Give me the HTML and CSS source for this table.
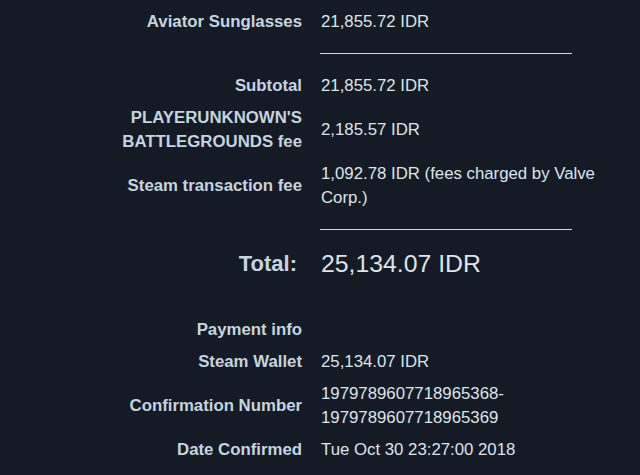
FILE: index.html
```html
<!DOCTYPE html>
<html>
<head>
<meta charset="utf-8">
<link rel="stylesheet" href="styles.css">
</head>
<body>
<div class="receipt">
  <div class="row">
    <div class="label">Aviator Sunglasses</div>
    <div class="value">21,855.72 IDR</div>
  </div>
  <div class="rule-row"><div class="rule"></div></div>
  <div class="row">
    <div class="label">Subtotal</div>
    <div class="value">21,855.72 IDR</div>
  </div>
  <div class="row">
    <div class="label">PLAYERUNKNOWN'S BATTLEGROUNDS fee</div>
    <div class="value">2,185.57 IDR</div>
  </div>
  <div class="row">
    <div class="label">Steam transaction fee</div>
    <div class="value">1,092.78 IDR (fees charged by Valve Corp.)</div>
  </div>
  <div class="rule-row"><div class="rule"></div></div>
  <div class="row total">
    <div class="label">Total:</div>
    <div class="value">25,134.07 IDR</div>
  </div>
  <div class="row payment">
    <div class="label">Payment info</div>
    <div class="value"></div>
  </div>
  <div class="row">
    <div class="label">Steam Wallet</div>
    <div class="value">25,134.07 IDR</div>
  </div>
  <div class="row">
    <div class="label">Confirmation Number</div>
    <div class="value">1979789607718965368-1979789607718965369</div>
  </div>
  <div class="row">
    <div class="label">Date Confirmed</div>
    <div class="value">Tue Oct 30 23:27:00 2018</div>
  </div>
</div>
</body>
</html>
```

FILE: styles.css
```css
html, body {
  margin: 0;
  padding: 0;
  background: #141b25;
}
body {
  font-family: "Liberation Sans", Arial, sans-serif;
  font-size: 16.8px;
  line-height: 24px;
  width: 640px;
  height: 475px;
  overflow: hidden;
}
.receipt {
  padding-top: 10px;
  display: flex;
  flex-direction: column;
  gap: 8px;
}
.row {
  display: flex;
  align-items: center;
  gap: 19px;
}
.label {
  width: 181px;
  margin-left: 121px;
  text-align: right;
  font-weight: bold;
  color: #c6d4df;
  flex: none;
}
.value {
  width: 280px;
  color: #dde4ea;
  flex: none;
}
.rule-row {
  padding-left: 320px;
  margin: 11px 0 12px;
}
.rule {
  width: 252px;
  height: 1px;
  background: #d3dbe2;
}
.total .label {
  font-size: 22px;
  line-height: 28px;
  width: 176px;
  padding-right: 5px;
}
.total .value {
  font-size: 24.8px;
  line-height: 28px;
}
.payment {
  margin-top: 32px;
}
```
